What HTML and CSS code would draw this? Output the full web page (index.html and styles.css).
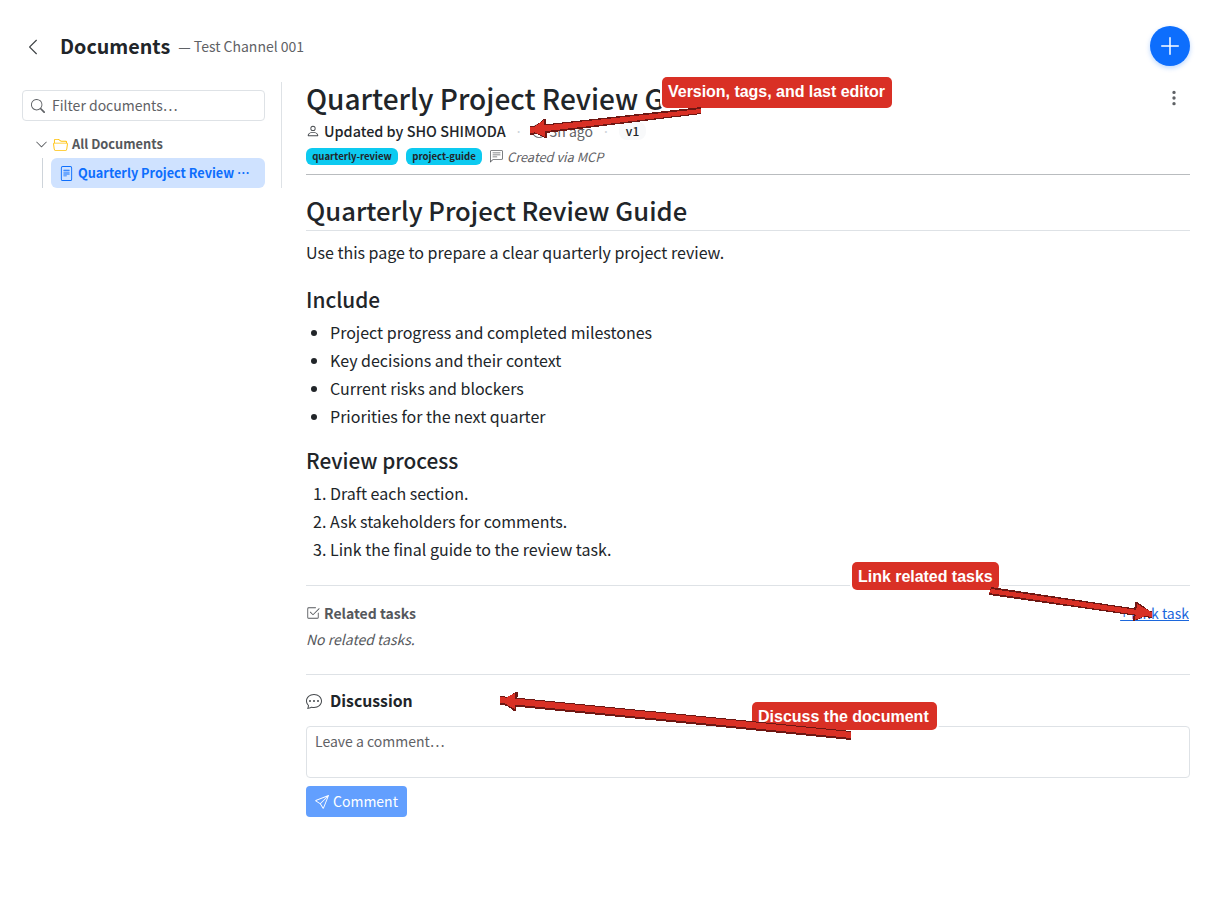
FILE: index.html
```html
<!DOCTYPE html>
<html lang="en">
<head>
<meta charset="utf-8">
<title>Documents</title>
<link rel="stylesheet" href="styles.css">
</head>
<body>
<header class="topbar">
  <svg class="back" viewBox="0 0 16 16"><path d="M11.354 1.646a.5.5 0 0 1 0 .708L5.707 8l5.647 5.646a.5.5 0 0 1-.708.708l-6-6a.5.5 0 0 1 0-.708l6-6a.5.5 0 0 1 .708 0"/></svg>
  <h1 class="page-title">Documents</h1>
  <span class="channel">— Test Channel 001</span>
  <button class="add"><svg viewBox="0 0 16 16"><path d="M8 2a.5.5 0 0 1 .5.5v5h5a.5.5 0 0 1 0 1h-5v5a.5.5 0 0 1-1 0v-5h-5a.5.5 0 0 1 0-1h5v-5A.5.5 0 0 1 8 2"/></svg></button>
</header>
<div class="columns">
  <aside class="sidebar">
    <div class="filter">
      <svg viewBox="0 0 16 16"><path d="M11.742 10.344a6.500 6.500 0 1 0-1.397 1.398h-.001q.044.06.098.115l3.850 3.850a1 1 0 0 0 1.415-1.414l-3.850-3.850a1 1 0 0 0-.115-.1zM12 6.500a5.500 5.500 0 1 1-11 0 5.500 5.500 0 0 1 11 0"/></svg>
      <span>Filter documents…</span>
    </div>
    <div class="root">
      <svg class="chevron" viewBox="0 0 16 16"><path d="M1.646 4.646a.5.5 0 0 1 .708 0L8 10.293l5.646-5.647a.5.5 0 0 1 .708.708l-6 6a.5.5 0 0 1-.708 0l-6-6a.5.5 0 0 1 0-.708"/></svg>
      <svg class="folder" viewBox="0 0 16 16"><path d="M1 3.500A1.500 1.500 0 0 1 2.500 2h2.764c.958 0 1.760.560 2.311 1.184C7.985 3.648 8.480 4 9 4h4.500A1.500 1.500 0 0 1 15 5.500v.640c.570.265.940.876.856 1.546l-.640 5.124A2.500 2.500 0 0 1 12.733 15H3.266a2.500 2.500 0 0 1-2.481-2.190l-.640-5.124A1.500 1.500 0 0 1 1 6.140zM2 6h12v-.5a.5.5 0 0 0-.5-.5H9c-.964 0-1.710-.629-2.174-1.154C6.374 3.334 5.820 3 5.264 3H2.500a.5.5 0 0 0-.5.5zm-.367 1a.5.5 0 0 0-.496.562l.640 5.124A1.500 1.500 0 0 0 3.266 14h9.468a1.500 1.500 0 0 0 1.489-1.314l.640-5.124A.5.5 0 0 0 14.367 7z"/></svg>
      <span>All Documents</span>
    </div>
    <div class="children">
      <div class="doc-item">
        <svg viewBox="0 0 16 16"><path d="M5 4a.5.5 0 0 0 0 1h6a.5.5 0 0 0 0-1zm-.5 2.500A.5.5 0 0 1 5 6h6a.5.5 0 0 1 0 1H5a.5.5 0 0 1-.5-.5M5 8a.5.5 0 0 0 0 1h6a.5.5 0 0 0 0-1zm0 2a.5.5 0 0 0 0 1h3a.5.5 0 0 0 0-1z"/><path d="M2 2a2 2 0 0 1 2-2h8a2 2 0 0 1 2 2v12a2 2 0 0 1-2 2H4a2 2 0 0 1-2-2zm10-1H4a1 1 0 0 0-1 1v12a1 1 0 0 0 1 1h8a1 1 0 0 0 1-1V2a1 1 0 0 0-1-1"/></svg>
        <span class="doc-name" lang="ja">Quarterly Project Review ⋯</span>
      </div>
    </div>
  </aside>
  <main class="content">
    <div class="doc-head">
      <h2 class="doc-title">Quarterly Project Review Guide</h2>
      <svg class="kebab" viewBox="0 0 16 16"><path d="M9.500 13a1.500 1.500 0 1 1-3 0 1.500 1.500 0 0 1 3 0m0-5a1.500 1.500 0 1 1-3 0 1.500 1.500 0 0 1 3 0m0-5a1.500 1.500 0 1 1-3 0 1.500 1.500 0 0 1 3 0"/></svg>
    </div>
    <div class="meta">
      <svg class="person" viewBox="0 0 16 16"><path d="M8 8a3 3 0 1 0 0-6 3 3 0 0 0 0 6m2-3a2 2 0 1 1-4 0 2 2 0 0 1 4 0m4 8c0 1-1 1-1 1H3s-1 0-1-1 1-4 6-4 6 3 6 4m-1-.004c-.001-.246-.154-.986-.832-1.664C11.516 10.680 10.289 10 8 10s-3.516.680-4.168 1.332c-.678.678-.830 1.418-.832 1.664z"/></svg>
      <span class="editor">Updated by SHO SHIMODA</span>
      <span class="dot">·</span>
      <svg class="clock" viewBox="0 0 16 16"><path d="M8 3.500a.5.5 0 0 0-1 0V9a.5.5 0 0 0 .252.434l3.500 2a.5.5 0 0 0 .496-.868L8 8.710z"/><path d="M8 16A8 8 0 1 0 8 0a8 8 0 0 0 0 16m7-8A7 7 0 1 1 1 8a7 7 0 0 1 14 0"/></svg>
      <span class="ago">3h ago</span>
      <span class="dot">·</span>
      <span class="version">v1</span>
    </div>
    <div class="tags">
      <span class="tag tag-a">quarterly-review</span>
      <span class="tag tag-b">project-guide</span>
      <svg viewBox="0 0 16 16"><path d="M14 1a1 1 0 0 1 1 1v8a1 1 0 0 1-1 1H4.414A2 2 0 0 0 3 11.586l-2 2V2a1 1 0 0 1 1-1zM2 0a2 2 0 0 0-2 2v12.793a.5.5 0 0 0 .854.353l2.853-2.853A1 1 0 0 1 4.414 12H14a2 2 0 0 0 2-2V2a2 2 0 0 0-2-2z"/><path d="M3 3.500a.5.5 0 0 1 .5-.5h9a.5.5 0 0 1 0 1h-9a.5.5 0 0 1-.5-.5M3 6a.5.5 0 0 1 .5-.5h9a.5.5 0 0 1 0 1h-9A.5.5 0 0 1 3 6m0 2.500a.5.5 0 0 1 .5-.5h5a.5.5 0 0 1 0 1h-5a.5.5 0 0 1-.5-.5"/></svg>
      <em class="via">Created via MCP</em>
    </div>
    <article class="body">
      <h2 class="body-title">Quarterly Project Review Guide</h2>
      <p class="intro">Use this page to prepare a clear quarterly project review.</p>
      <h3 class="section">Include</h3>
      <ul class="list">
        <li>Project progress and completed milestones</li>
        <li>Key decisions and their context</li>
        <li>Current risks and blockers</li>
        <li>Priorities for the next quarter</li>
      </ul>
      <h3 class="section">Review process</h3>
      <ol class="list">
        <li>Draft each section.</li>
        <li>Ask stakeholders for comments.</li>
        <li>Link the final guide to the review task.</li>
      </ol>
    </article>
    <section class="related">
      <div class="related-head">
        <svg viewBox="0 0 16 16"><path d="M3 14.500A1.500 1.500 0 0 1 1.500 13V3A1.500 1.500 0 0 1 3 1.500h8a.5.5 0 0 1 0 1H3a.5.5 0 0 0-.5.5v10a.5.5 0 0 0 .5.5h10a.5.5 0 0 0 .5-.5V8a.5.5 0 0 1 1 0v5a1.500 1.500 0 0 1-1.500 1.500z"/><path d="m8.354 10.354 7-7a.5.5 0 0 0-.708-.708L8 9.293 5.354 6.646a.5.5 0 1 0-.708.708l3 3a.5.5 0 0 0 .708 0"/></svg>
        <span class="related-title">Related tasks</span>
        <a class="link-task">+ Link task</a>
      </div>
      <div class="none">No related tasks.</div>
    </section>
    <section class="discussion">
      <div class="discussion-head">
        <svg viewBox="0 0 16 16"><path d="M5 8a1 1 0 1 1-2 0 1 1 0 0 1 2 0m4 0a1 1 0 1 1-2 0 1 1 0 0 1 2 0m3 1a1 1 0 1 0 0-2 1 1 0 0 0 0 2"/><path d="m2.165 15.803.020-.004c1.830-.363 2.948-.842 3.468-1.105A9 9 0 0 0 8 15c4.418 0 8-3.134 8-7s-3.582-7-8-7-8 3.134-8 7c0 1.760.743 3.370 1.970 4.600a10.400 10.400 0 0 1-.524 2.318l-.003.011a11 11 0 0 1-.244.637c-.079.186.074.394.273.362a22 22 0 0 0 .693-.125m.800-3.108a1 1 0 0 0-.287-.801C1.618 10.830 1 9.468 1 8c0-3.192 3.004-6 7-6s7 2.808 7 6-3.004 6-7 6a8 8 0 0 1-2.088-.272 1 1 0 0 0-.711.074c-.387.196-1.240.570-2.634.893a11 11 0 0 0 .398-2"/></svg>
        <h3 class="discussion-title">Discussion</h3>
      </div>
      <div class="comment-box">Leave a comment…</div>
      <button class="send"><svg viewBox="0 0 16 16"><path d="M15.854.146a.5.5 0 0 1 .110.540l-5.819 14.547a.750.750 0 0 1-1.329.124l-3.178-4.995L.643 7.184a.750.750 0 0 1 .124-1.330L15.314.037a.5.5 0 0 1 .540.110ZM6.636 10.070l2.761 4.338L14.130 2.576zm6.787-8.201L1.591 6.602l4.339 2.760z"/></svg><span>Comment</span></button>
    </section>
  </main>
</div>
<div class="callout callout-meta">Version, tags, and last editor</div>
<div class="callout callout-link">Link related tasks</div>
<div class="callout callout-discuss">Discuss the document</div>
<svg class="arrows" viewBox="0 0 1212 912" shape-rendering="crispEdges">
  <g class="edge">
    <path d="M530 126 701 107V114L530 135Z"/><path d="M530 130 544 119H546L547 138H545Z"/>
    <path d="M991 587 1152 611V618L989 595Z"/><path d="M1135 602H1137L1153 613 1134 621H1133Z"/>
    <path d="M500 696 851 731V740L500 705Z"/><path d="M500 701 516 692H518L516 711H514Z"/>
  </g>
  <g class="fill">
    <path d="M530 127 701 109V113L530 133Z"/><path d="M530 130 544 120 545 137Z"/>
    <path d="M991 589 1152 612V617L989 593Z"/><path d="M1137 604 1153 613 1135 620Z"/>
    <path d="M500 697 851 732V738L500 703Z"/><path d="M500 701 515 693V709Z"/>
  </g>
</svg>
</body>
</html>
```
FILE: styles.css
```css
* { box-sizing: border-box; }
body {
  margin: 0;
  height: 912px;
  position: relative;
  overflow: hidden;
  background: #fff;
  color: #212529;
  font-family: "Noto Sans CJK JP", "Noto Sans", sans-serif;
  font-size: 16px;
}
svg { display: block; fill: currentColor; flex: none; }
h1, h2, h3, p, ul, ol { margin: 0; }
h1, h2, h3 { font-weight: 500; }
span, em, a { white-space: nowrap; }
.topbar { display: flex; align-items: center; height: 82px; padding: 10px 22px 0 24px; }
.back { width: 18px; height: 18px; margin: 2px 18px 0 0; color: #3c4043; }
.page-title { font-size: 19.7px; font-weight: 700; line-height: 30px; }
.channel { margin-left: 8px; font-size: 14px; color: #5f6266; }
.add {
  display: flex; align-items: center; justify-content: center;
  width: 40px; height: 40px; margin-left: auto; padding: 0;
  border: 0; border-radius: 50%; background: #0d6efd; color: #fff;
  box-shadow: 0 2px 5px rgba(13, 110, 253, .28);
}
.add svg { width: 24px; height: 24px; }
.columns { display: flex; align-items: flex-start; }
.sidebar { width: 282px; height: 106px; padding: 8px 16px 0 22px; border-right: 1px solid #dee2e6; }
.filter {
  display: flex; align-items: center; gap: 7px; height: 31px; padding: 0 8px;
  border: 1px solid #dee2e6; border-radius: 4px; color: #5f6266; font-size: 14px;
}
.filter svg { width: 14px; height: 14px; }
.filter span { padding-bottom: 1px; }
.root { display: flex; align-items: center; height: 30px; margin-top: 8px; padding-left: 13px; color: #55585c; font-size: 12.8px; font-weight: 700; }
.root span, .doc-name { padding-bottom: 2px; }
.chevron { width: 13px; height: 13px; margin-right: 5px; }
.folder { width: 15px; height: 15px; margin-right: 4px; color: #ffc107; }
.children { margin-left: 20px; margin-top: -1px; padding-left: 8px; border-left: 1px solid #ced4da; }
.doc-item { display: flex; align-items: center; gap: 4px; height: 30px; padding-left: 8px; border-radius: 6px; background: #cfe2ff; color: #0d6efd; font-size: 12.7px; font-weight: 700; }
.doc-item svg { width: 15px; height: 15px; }
.content { width: 884px; margin-left: 24px; }
.doc-head { display: flex; justify-content: space-between; height: 37px; }
.doc-title { font-size: 28px; line-height: 33px; }
.kebab { width: 18px; height: 18px; margin: 7px 7px 0 0; color: #5f6266; }
.meta { display: flex; align-items: center; height: 25px; padding-bottom: 2px; font-size: 14px; }
.person { width: 14px; height: 14px; margin-right: 4px; color: #45494d; }
.editor { font-size: 14.4px; font-weight: 500; }
.dot { margin: 0 9px; color: #ced4da; }
.clock { width: 14px; height: 14px; margin-right: 4px; color: #5f6266; }
.ago { color: #5f6266; }
.version { padding: 0 7px; border-radius: 8px; background: #f8f9fa; font-size: 12px; font-weight: 500; line-height: 18px; }
.tags { display: flex; align-items: center; height: 31px; padding-bottom: 6px; border-bottom: 1px solid #b9bcbf; color: #5f6266; }
.tag { height: 17px; margin-right: 8px; border-radius: 6px; background: #0dcaf0; color: #212529; text-align: center; font-size: 9.6px; font-weight: 700; line-height: 16px; }
.tag-a { width: 92px; }
.tag-b { width: 76px; }
.tags svg { width: 13px; height: 13px; margin-right: 4px; }
.via { font-size: 12.8px; }
.body { padding-top: 18px; }
.body-title { height: 38px; border-bottom: 1px solid #dee2e6; font-size: 25.6px; line-height: 33px; }
.intro { margin-top: 7px; line-height: 28px; }
.section { margin-top: 21px; font-size: 20.8px; line-height: 25px; }
.list { margin-top: 6px; padding-left: 24px; line-height: 28px; }
.list + .section { margin-top: 18px; }
.related { height: 89px; margin-top: 22px; padding-top: 14px; border-top: 1px solid #dee2e6; color: #55585c; font-size: 14px; }
.related-head { display: flex; align-items: center; height: 26px; }
.related-head svg { width: 14px; height: 14px; margin-right: 4px; }
.related-title { font-size: 14px; font-weight: 700; }
.link-task { margin: 0 1px 0 auto; color: #1c67dc; text-decoration: underline; }
.none { font-style: italic; line-height: 26px; }
.discussion { padding-top: 13px; border-top: 1px solid #dee2e6; }
.discussion-head { display: flex; align-items: center; gap: 8px; height: 26px; }
.discussion-head svg { width: 16px; height: 16px; color: #45494d; }
.discussion-title { font-size: 15.8px; font-weight: 700; line-height: 24px; }
.comment-box { height: 52px; margin-top: 12px; padding: 3px 8px; border: 1px solid #dee2e6; border-radius: 4px; color: #5f6266; font-size: 14px; line-height: 22px; }
.send { display: flex; align-items: center; gap: 4px; width: 101px; height: 31px; margin-top: 8px; padding: 0 9px; border: 0; border-radius: 4px; background: #629ffe; color: #fff; font: 14px "Noto Sans CJK JP", sans-serif; }
.send svg { width: 14px; height: 14px; }
.send span { padding-bottom: 1px; }
.callout {
  position: absolute; height: 28px; padding-left: 6px; border-radius: 5px; background: #d93025; color: #fff;
  box-shadow: 0 0 0 2px #fff;
  white-space: nowrap; letter-spacing: -.03px; font: bold 16px/29px "Liberation Sans", sans-serif;
}
.callout-meta { left: 662px; top: 77px; width: 230px; height: 31px; }
.callout-link { left: 852px; top: 562px; width: 147px; }
.callout-discuss { left: 752px; top: 702px; width: 185px; letter-spacing: 0; }
.arrows { position: absolute; left: 0; top: 0; width: 1212px; height: 912px; }
.edge { fill: #6e1713; }
.fill { fill: #d93025; }
```
